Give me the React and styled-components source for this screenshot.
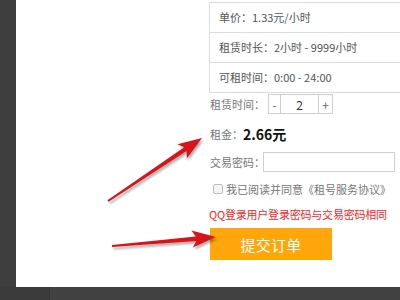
import React from "react";
import styled, { createGlobalStyle } from "styled-components";

const GlobalStyle = createGlobalStyle`
  html, body {
    margin: 0;
    padding: 0;
    background: #3e3e3e;
  }
  * {
    box-sizing: border-box;
  }
`;

const FONT = `"Microsoft YaHei", "Noto Sans CJK SC", "Noto Sans", sans-serif`;

const Page = styled.div`
  position: relative;
  width: 400px;
  height: 300px;
  overflow: hidden;
  background: #3e3e3e;
  display: grid;
  grid-template-columns: 16px 1fr;
  grid-template-rows: 287px 13px;
  font-family: ${FONT};
`;

const Main = styled.main`
  grid-column: 2;
  grid-row: 1;
  background: #fff;
  overflow: hidden;
  padding: 2px 0 0 193px;
`;

const Footer = styled.footer`
  grid-column: 1 / -1;
  grid-row: 2;
  display: flex;
`;

const FooterCell = styled.div`
  width: ${(p) => (p.$grow ? "auto" : "50px")};
  flex: ${(p) => (p.$grow ? 1 : "none")};
  background: ${(p) => (p.$grow ? "#414141" : "#3b3b3b")};
  border-right: ${(p) => (p.$grow ? "none" : "1px solid #363636")};
`;

const Form = styled.div`
  width: 230px;
  display: flex;
  flex-direction: column;
  align-items: flex-start;
`;

const InfoBox = styled.div`
  width: 100%;
  border: 1px solid #dcdcdc;
  border-bottom: none;
`;

const InfoRow = styled.div`
  height: 30px;
  line-height: 29px;
  padding-left: 9px;
  border-bottom: 1px solid #dcdcdc;
  font-size: 11px;
  color: #555;
`;

const Row = styled.div`
  display: flex;
  align-items: center;
  height: ${(p) => p.$h || 20}px;
  margin-top: ${(p) => p.$mt || 0}px;
  padding-left: ${(p) => p.$pl || 0}px;
`;

const Label = styled.span`
  font-size: 11px;
  color: #777;
  white-space: nowrap;
  margin-right: ${(p) => p.$gap ?? 3}px;
`;

const StepBtn = styled.span`
  display: flex;
  align-items: center;
  justify-content: center;
  width: ${(p) => p.$w}px;
  height: 20px;
  border: 1px solid #cfcfcf;
  font-size: 12px;
  color: #666;
`;

const StepValue = styled.span`
  display: flex;
  align-items: center;
  justify-content: center;
  width: 37px;
  height: 20px;
  border-top: 1px solid #cfcfcf;
  border-bottom: 1px solid #cfcfcf;
  font-size: 12px;
  color: #333;
`;

const Price = styled.span`
  font-size: 14px;
  font-weight: 700;
  color: #111;
`;

const PwdInput = styled.div`
  width: 132px;
  height: 20px;
  border: 1px solid #cfcfcf;
`;

const Check = styled.span`
  width: 10px;
  height: 10px;
  border: 1px solid #bdbdbd;
  border-radius: 2px;
  background: #f4f4f4;
  margin-right: 3px;
`;

const Agree = styled.span`
  font-size: 11px;
  color: #777;
  white-space: nowrap;
`;

const Warn = styled.div`
  margin-top: 11px;
  height: 14px;
  line-height: 14px;
  font-size: 11px;
  color: #f02828;
  white-space: nowrap;
  letter-spacing: -0.2px;
`;

const SubmitBtn = styled.button`
  margin-top: 7px;
  margin-left: 1px;
  width: 122px;
  height: 32px;
  border: none;
  background: #ffa70a;
  color: #fff;
  font-family: ${FONT};
  font-size: 15px;
  letter-spacing: 0.3px;
  padding: 0;
`;

const Overlay = styled.svg`
  position: absolute;
  left: 0;
  top: 0;
  pointer-events: none;
`;

const arrowPoints = (x1, y1, x2, y2, head = 24, hw = 8.5, sw = 2.2) => {
  const dx = x2 - x1;
  const dy = y2 - y1;
  const len = Math.hypot(dx, dy);
  const ux = dx / len;
  const uy = dy / len;
  const nx = -uy;
  const ny = ux;
  const bx = x2 - ux * head;
  const by = y2 - uy * head;
  const pts = [
    [x1 + nx * 1, y1 + ny * 1],
    [bx + ux * 4 + nx * sw, by + uy * 4 + ny * sw],
    [bx + nx * hw, by + ny * hw],
    [x2, y2],
    [bx - nx * hw, by - ny * hw],
    [bx + ux * 4 - nx * sw, by + uy * 4 - ny * sw],
    [x1 - nx * 1, y1 - ny * 1],
  ];
  return pts.map((p) => p.map((v) => v.toFixed(1)).join(",")).join(" ");
};

const Arrow = ({ from, to }) => (
  <g>
    <polygon
      points={arrowPoints(from[0] + 1.5, from[1] + 2.5, to[0] + 1.5, to[1] + 2.5)}
      fill="#000"
      opacity="0.3"
      filter="url(#blur)"
    />
    <polygon points={arrowPoints(from[0], from[1], to[0], to[1])} fill="#d8141a" />
  </g>
);

export default function App() {
  return (
    <>
      <GlobalStyle />
      <Page>
        <Main>
          <Form>
            <InfoBox>
              <InfoRow>单价：1.33元/小时</InfoRow>
              <InfoRow>租赁时长：2小时 - 9999小时</InfoRow>
              <InfoRow>可租时间：0:00 - 24:00</InfoRow>
            </InfoBox>
            <Row $h={20} $mt={1} $pl={1}>
              <Label>租赁时间：</Label>
              <StepBtn $w={13}>-</StepBtn>
              <StepValue>2</StepValue>
              <StepBtn $w={15}>+</StepBtn>
            </Row>
            <Row $h={24} $mt={8} $pl={1}>
              <Label $gap={0}>租金：</Label>
              <Price>2.66元</Price>
            </Row>
            <Row $h={20} $mt={6} $pl={1}>
              <Label $gap={-2}>交易密码：</Label>
              <PwdInput />
            </Row>
            <Row $h={14} $mt={10} $pl={4}>
              <Check />
              <Agree>我已阅读并同意《租号服务协议》</Agree>
            </Row>
            <Warn>QQ登录用户登录密码与交易密码相同</Warn>
            <SubmitBtn>提交订单</SubmitBtn>
          </Form>
        </Main>
        <Footer>
          <FooterCell />
          <FooterCell $grow />
        </Footer>
        <Overlay width="400" height="300" viewBox="0 0 400 300">
          <defs>
            <filter id="blur" x="-10%" y="-20%" width="120%" height="140%">
              <feGaussianBlur stdDeviation="1.3" />
            </filter>
          </defs>
          <Arrow from={[108, 201]} to={[202, 138]} />
          <Arrow from={[112, 246]} to={[216, 237]} />
        </Overlay>
      </Page>
    </>
  );
}
